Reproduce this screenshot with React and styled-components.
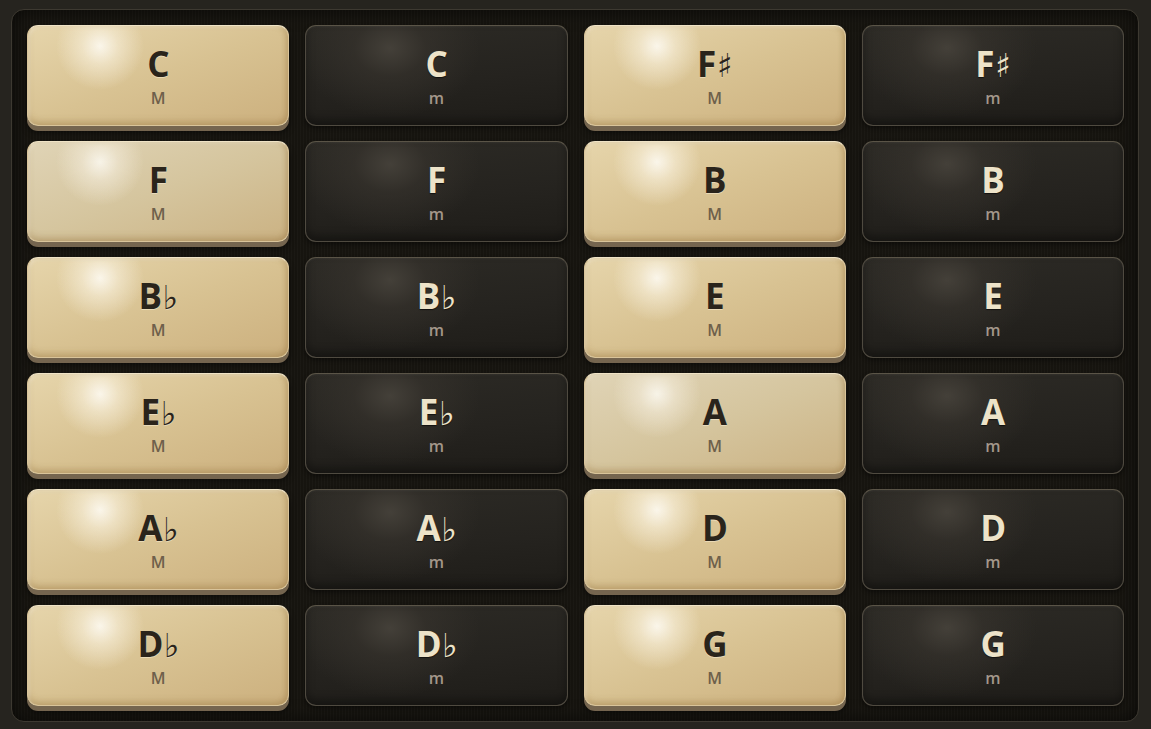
import styled, { createGlobalStyle, css } from 'styled-components';

const GlobalStyle = createGlobalStyle`
  html, body {
    margin: 0;
    padding: 0;
    background: #26241f;
    font-family: "Open Sans", "DejaVu Sans", sans-serif;
  }
`;

const Page = styled.div`
  width: 1151px;
  height: 729px;
  box-sizing: border-box;
  padding: 9px 12px 7px 11px;
`;

const Board = styled.div`
  height: 100%;
  box-sizing: border-box;
  border: 1px solid #3d3931;
  border-radius: 13px;
  background-color: #16140f;
  background-image: repeating-linear-gradient(
    90deg,
    rgba(255, 255, 255, 0.018) 0px,
    rgba(255, 255, 255, 0.018) 1px,
    transparent 1px,
    transparent 3px
  );
  box-shadow: inset 0 0 18px rgba(0, 0, 0, 0.6);
  padding: 15px 14px 14px 15px;
  display: grid;
  grid-template-columns: repeat(4, 1fr);
  grid-template-rows: repeat(6, 101px);
  column-gap: 16px;
  row-gap: 15px;
`;

const majorFace = css`
  border: 1px solid #d9c49a;
  border-top-color: #efe3c6;
  background:
    radial-gradient(circle at 72px 20px, rgba(252, 248, 238, 0.95) 0px, rgba(248, 240, 220, 0.6) 18px, rgba(240, 226, 190, 0) 44px),
    linear-gradient(160deg, #e6d5ab 0%, #d8c292 50%, #ccb07e 100%);
  box-shadow:
    inset 0 -4px 6px rgba(140, 105, 50, 0.28),
    inset -3px 0 5px rgba(150, 115, 60, 0.22),
    inset 2px 2px 3px rgba(255, 250, 235, 0.35),
    0 5px 0 #75654f,
    0 6px 6px rgba(0, 0, 0, 0.55);
`;

const majorFaint = css`
  background:
    radial-gradient(circle at 72px 20px, rgba(250, 247, 238, 0.9) 0px, rgba(245, 238, 222, 0.55) 18px, rgba(235, 225, 200, 0) 44px),
    linear-gradient(160deg, #e0d4b6 0%, #d5c59e 50%, #cbb283 100%);
`;

const minorFace = css`
  border: 1px solid #4f4a40;
  border-top-color: #5a5447;
  background:
    radial-gradient(ellipse 90px 70px at 84px 22px, rgba(68, 64, 57, 1) 0%, rgba(56, 52, 46, 0.6) 40%, rgba(40, 37, 32, 0) 100%),
    linear-gradient(175deg, #2c2a25 0%, #25231f 55%, #1e1c18 100%);
  box-shadow:
    inset 0 -5px 8px rgba(0, 0, 0, 0.35),
    inset 0 1px 2px rgba(255, 255, 255, 0.05),
    0 2px 4px rgba(0, 0, 0, 0.45);
`;

const Key = styled.button`
  all: unset;
  box-sizing: border-box;
  height: 101px;
  border-radius: 11px;
  display: flex;
  flex-direction: column;
  align-items: center;
  justify-content: center;
  cursor: pointer;
  ${(p) => (p.$minor ? minorFace : majorFace)}
  ${(p) => p.$faint && !p.$minor && majorFaint}
`;

const Root = styled.span`
  display: flex;
  align-items: baseline;
  height: 40px;
  font-family: "Open Sans", "DejaVu Sans", sans-serif;
  font-weight: 700;
  font-size: 35px;
  line-height: 40px;
  letter-spacing: -0.5px;
  color: ${(p) => (p.$minor ? '#ede3c9' : '#2a241b')};
  text-shadow: ${(p) =>
    p.$minor ? '0 1px 1px rgba(0, 0, 0, 0.6)' : '0 1px 0 rgba(255, 248, 230, 0.45)'};
`;

const Accidental = styled.span`
  font-family: "DejaVu Sans", sans-serif;
  font-weight: 700;
  font-size: 33px;
  line-height: 40px;
  margin-left: 1px;
`;

const Quality = styled.span`
  font-family: "Open Sans", sans-serif;
  font-weight: 600;
  font-size: 16px;
  line-height: 20px;
  margin-top: 4px;
  color: ${(p) => (p.$minor ? '#a3978a' : '#6e604b')};
`;

const rows = [
  ['C', '', 'F', '♯'],
  ['F', '', 'B', ''],
  ['B', '♭', 'E', ''],
  ['E', '♭', 'A', ''],
  ['A', '♭', 'D', ''],
  ['D', '♭', 'G', ''],
];

const faintKeys = ['F', 'A'];

function ChordKey({ note, acc, minor }) {
  return (
    <Key $minor={minor} $faint={!acc && faintKeys.includes(note)}>
      <Root $minor={minor}>
        {note}
        {acc && <Accidental>{acc}</Accidental>}
      </Root>
      <Quality $minor={minor}>{minor ? 'm' : 'M'}</Quality>
    </Key>
  );
}

function App() {
  return (
    <Page>
      <GlobalStyle />
      <Board>
        {rows.map(([n1, a1, n2, a2]) => [
          <ChordKey key={n1 + a1 + 'M'} note={n1} acc={a1} />,
          <ChordKey key={n1 + a1 + 'm'} note={n1} acc={a1} minor />,
          <ChordKey key={n2 + a2 + 'M'} note={n2} acc={a2} />,
          <ChordKey key={n2 + a2 + 'm'} note={n2} acc={a2} minor />,
        ])}
      </Board>
    </Page>
  );
}

export default App;
